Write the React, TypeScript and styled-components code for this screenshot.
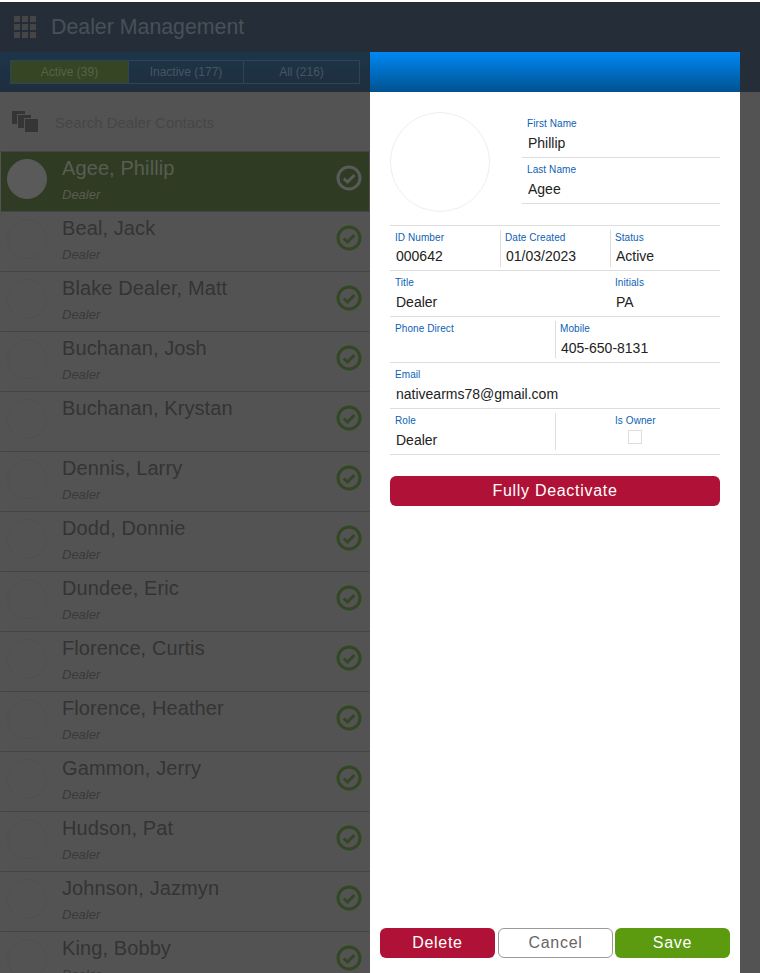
import { createGlobalStyle, styled } from "styled-components";

const GlobalStyle = createGlobalStyle`
  html, body {
    margin: 0;
    padding: 0;
    background: #fff;
  }
  * {
    box-sizing: border-box;
  }
`;

const Screen = styled.div`
  position: relative;
  width: 760px;
  height: 973px;
  margin-top: 2px;
  overflow: hidden;
  background: #535353;
  font-family: "Liberation Sans", Arial, sans-serif;
`;

const Header = styled.div`
  background: #252e38;
  height: 90px;
`;

const TitleBar = styled.div`
  height: 50px;
  display: flex;
  align-items: center;
  padding-left: 14px;
  gap: 15px;
  color: #485059;
  font-size: 21.33px;
`;

const Tabs = styled.div`
  width: 370px;
  height: 40px;
  background: linear-gradient(#1d3549, #1f2e3d);
  padding: 8px 10px 0;
`;

const TabRow = styled.div`
  display: grid;
  grid-template-columns: 117px 115px 116px;
  width: 350px;
  height: 24px;
  border: 1px solid #2d4558;
`;

const Tab = styled.div<{ $active?: boolean }>`
  background: ${(p) => (p.$active ? "#364524" : "transparent")};
  border-left: ${(p) => (p.$active ? "none" : "1px solid #2d4558")};
  color: ${(p) => (p.$active ? "#55634a" : "#465664")};
  font-size: 12px;
  line-height: 22px;
  text-align: center;
`;

const ListColumn = styled.div`
  width: 370px;
`;

const SearchRow = styled.div`
  height: 59px;
  display: flex;
  align-items: center;
  padding: 1px 0 0 12px;
  gap: 17px;
  color: #464646;
  font-size: 15px;
`;

const Row = styled.div<{ $selected?: boolean }>`
  height: 60px;
  display: flex;
  align-items: flex-start;
  border-top: 1px solid #444;
  background: ${(p) => (p.$selected ? "#303b24" : "transparent")};
  border-left: 1px solid ${(p) => (p.$selected ? "#535353" : "transparent")};
  border-right: 1px solid ${(p) => (p.$selected ? "#535353" : "transparent")};
  padding: 4px 7px 0 6px;
`;

const Avatar = styled.div<{ $selected?: boolean }>`
  width: 40px;
  height: 40px;
  margin-top: 3px;
  border-radius: 50%;
  flex: none;
  background: ${(p) => (p.$selected ? "#5a5a5a" : "transparent")};
  border: 1px solid ${(p) => (p.$selected ? "#5a5a5a" : "#505050")};
`;

const RowText = styled.div`
  flex: 1;
  padding-left: 15px;
`;

const Name = styled.div<{ $selected?: boolean }>`
  font-size: 20px;
  line-height: 24px;
  letter-spacing: 0.1px;
  color: ${(p) => (p.$selected ? "#585d52" : "#343434")};
`;

const Sub = styled.div<{ $selected?: boolean }>`
  margin-top: 7px;
  font-size: 13px;
  font-style: italic;
  color: ${(p) => (p.$selected ? "#585d50" : "#3a3a3a")};
`;

const StatusIcon = styled.svg`
  flex: none;
  margin-top: 9px;
`;

const Modal = styled.div`
  position: absolute;
  top: 50px;
  left: 370px;
  width: 370px;
  height: 921px;
  background: #fff;
  display: flex;
  flex-direction: column;
`;

const ModalHead = styled.div`
  height: 40px;
  background: linear-gradient(#0088f4, #005290);
  flex: none;
`;

const ModalBody = styled.div`
  flex: 1;
  padding: 20px 20px 0;
`;

const Top = styled.div`
  display: flex;
  height: 113px;
`;

const Photo = styled.div`
  width: 100px;
  height: 100px;
  border-radius: 50%;
  border: 1px solid #eee;
  flex: none;
`;

const NameFields = styled.div`
  width: 198px;
  margin-left: 32px;
`;

const NameField = styled.div`
  height: 46px;
  border-bottom: 1px solid #ddd;
  padding: 6px 6px 0 5px;
`;

const Line = styled.div<{ $columns: string }>`
  display: grid;
  grid-template-columns: ${(p) => p.$columns};
  height: 46px;
  border-bottom: 1px solid #ddd;
  padding-top: 4px;
`;

const Cell = styled.div<{ $divider?: boolean; $inset?: number }>`
  height: 37px;
  padding: 2px 0 0 ${(p) => p.$inset ?? (p.$divider ? 4 : 5)}px;
  border-left: ${(p) => (p.$divider ? "1px solid #ddd" : "none")};
`;

const Label = styled.div`
  font-size: 10px;
  line-height: 12px;
  letter-spacing: 0.08px;
  color: #0d5fb5;
`;

const Value = styled.div`
  margin-top: 3px;
  padding-left: 1px;
  font-size: 14px;
  line-height: 20px;
  height: 20px;
  color: #222;
`;

const FirstLine = styled(Line)`
  border-top: 1px solid #ddd;
  ${Value} {
    margin-top: 2px;
  }
`;

const Check = styled.div`
  width: 14px;
  height: 14px;
  margin: 3px 0 0 13px;
  border: 1px solid #ddd;
`;

const ActionButton = styled.button<{ $tone: "red" | "green" | "plain" }>`
  width: 115px;
  height: 30px;
  border-radius: 6px;
  font-family: inherit;
  font-size: 16px;
  letter-spacing: 0.7px;
  padding: 0;
  color: ${(p) => (p.$tone === "plain" ? "#666" : "#fff")};
  border: ${(p) => (p.$tone === "plain" ? "1px solid #999" : "none")};
  background: ${(p) =>
    p.$tone === "red" ? "#b01237" : p.$tone === "green" ? "#5c9a10" : "#fff"};
`;

const Deactivate = styled(ActionButton)`
  display: block;
  width: 100%;
  margin-top: 21px;
`;

const Footer = styled.div`
  display: grid;
  grid-template-columns: 118px 117px 115px;
  padding: 0 10px 15px;
`;

const contacts = [
  "Agee, Phillip",
  "Beal, Jack",
  "Blake Dealer, Matt",
  "Buchanan, Josh",
  "Buchanan, Krystan",
  "Dennis, Larry",
  "Dodd, Donnie",
  "Dundee, Eric",
  "Florence, Curtis",
  "Florence, Heather",
  "Gammon, Jerry",
  "Hudson, Pat",
  "Johnson, Jazmyn",
  "King, Bobby",
];

const GridIcon = () => (
  <svg width="22" height="22" viewBox="0 0 22 22" fill="#454545">
    {[0, 8, 16].map((y) =>
      [0, 8, 16].map((x) => <rect key={`${x}-${y}`} x={x} y={y} width="6" height="6" />),
    )}
  </svg>
);

const CopyIcon = () => (
  <svg width="26" height="22" viewBox="0 0 26 22" fill="#353535" stroke="#535353">
    <rect x="0" y="0" width="13" height="13" strokeWidth="0" />
    <rect x="5.5" y="3.5" width="14" height="14" />
    <rect x="12.5" y="7.5" width="14" height="14" />
  </svg>
);

const CheckIcon = ({ color }: { color: string }) => (
  <StatusIcon width="26" height="26" viewBox="0 0 26 26" fill="none" stroke={color}>
    <circle cx="13" cy="13" r="11" strokeWidth="3" />
    <path d="M7.8 13.5l3.7 3.5 7-7" strokeWidth="3" />
  </StatusIcon>
);

const App = () => {
  return (
    <Screen>
      <GlobalStyle />
      <Header>
        <TitleBar>
          <GridIcon />
          Dealer Management
        </TitleBar>
        <Tabs>
          <TabRow>
            <Tab $active>Active (39)</Tab>
            <Tab>Inactive (177)</Tab>
            <Tab>All (216)</Tab>
          </TabRow>
        </Tabs>
      </Header>
      <ListColumn>
        <SearchRow>
          <CopyIcon />
          Search Dealer Contacts
        </SearchRow>
        {contacts.map((name, i) => (
          <Row key={name} $selected={i === 0}>
            <Avatar $selected={i === 0} />
            <RowText>
              <Name $selected={i === 0}>{name}</Name>
              {name !== "Buchanan, Krystan" && <Sub $selected={i === 0}>Dealer</Sub>}
            </RowText>
            <CheckIcon color={i === 0 ? "#5a5a5a" : "#324823"} />
          </Row>
        ))}
      </ListColumn>
      <Modal>
        <ModalHead />
        <ModalBody>
          <Top>
            <Photo />
            <NameFields>
              <NameField>
                <Label>First Name</Label>
                <Value>Phillip</Value>
              </NameField>
              <NameField>
                <Label>Last Name</Label>
                <Value>Agee</Value>
              </NameField>
            </NameFields>
          </Top>
          <FirstLine $columns="110px 110px 110px">
            <Cell>
              <Label>ID Number</Label>
              <Value>000642</Value>
            </Cell>
            <Cell $divider>
              <Label>Date Created</Label>
              <Value>01/03/2023</Value>
            </Cell>
            <Cell $divider>
              <Label>Status</Label>
              <Value>Active</Value>
            </Cell>
          </FirstLine>
          <Line $columns="220px 110px">
            <Cell>
              <Label>Title</Label>
              <Value>Dealer</Value>
            </Cell>
            <Cell>
              <Label>Initials</Label>
              <Value>PA</Value>
            </Cell>
          </Line>
          <Line $columns="165px 165px">
            <Cell>
              <Label>Phone Direct</Label>
            </Cell>
            <Cell $divider>
              <Label>Mobile</Label>
              <Value>405-650-8131</Value>
            </Cell>
          </Line>
          <Line $columns="330px">
            <Cell>
              <Label>Email</Label>
              <Value>nativearms78@gmail.com</Value>
            </Cell>
          </Line>
          <Line $columns="165px 165px">
            <Cell>
              <Label>Role</Label>
              <Value>Dealer</Value>
            </Cell>
            <Cell $divider $inset={59}>
              <Label>Is Owner</Label>
              <Check />
            </Cell>
          </Line>
          <Deactivate $tone="red">Fully Deactivate</Deactivate>
        </ModalBody>
        <Footer>
          <ActionButton $tone="red">Delete</ActionButton>
          <ActionButton $tone="plain">Cancel</ActionButton>
          <ActionButton $tone="green">Save</ActionButton>
        </Footer>
      </Modal>
    </Screen>
  );
};

export default App;
